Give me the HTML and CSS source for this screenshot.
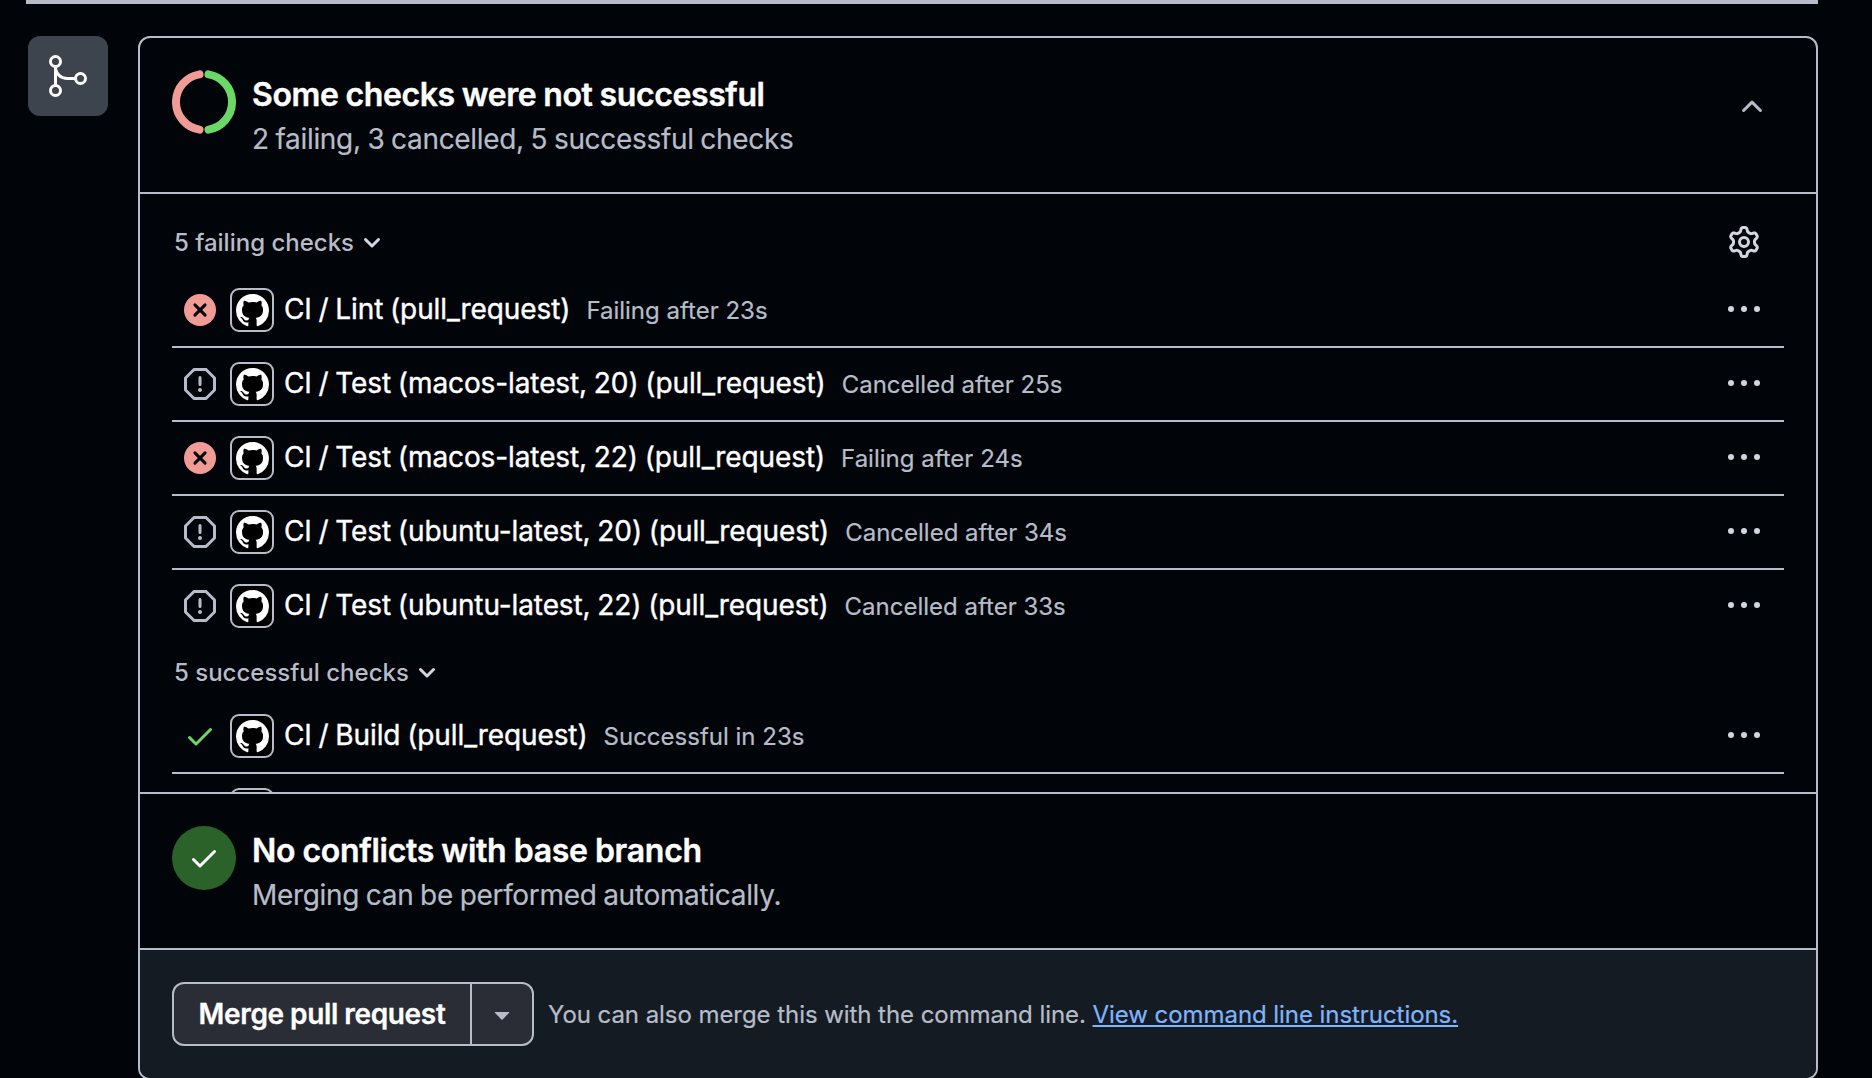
FILE: index.html
```html
<!DOCTYPE html>
<html lang="en">
<head>
<meta charset="utf-8">
<title>Merge status</title>
<link rel="stylesheet" href="styles.css">
</head>
<body>
<svg class="sprite" aria-hidden="true">
  <symbol id="fail" viewBox="0 0 32 32"><circle cx="16" cy="16" r="16" fill="#f19b96"/><path d="M10.9 10.9 21.1 21.1M21.1 10.9 10.9 21.1" stroke="#010409" stroke-width="3" stroke-linecap="round"/></symbol>
  <symbol id="stop" viewBox="0 0 16 16"><path fill="#b7bdc8" d="M4.47.22A.749.749 0 0 1 5 0h6c.199 0 .389.079.53.22l4.25 4.25c.141.14.22.331.22.53v6a.749.749 0 0 1-.22.53l-4.25 4.25A.749.749 0 0 1 11 16H5a.749.749 0 0 1-.53-.22L.22 11.53A.749.749 0 0 1 0 11V5c0-.199.079-.389.22-.53Zm.84 1.28L1.5 5.31v5.38l3.81 3.81h5.38l3.81-3.81V5.31L10.69 1.5ZM8 4a.75.75 0 0 1 .75.75v3.5a.75.75 0 0 1-1.5 0v-3.5A.75.75 0 0 1 8 4Zm0 8a1 1 0 1 1 0-2 1 1 0 0 1 0 2Z"/></symbol>
  <symbol id="check" viewBox="0 0 16 16"><path d="M13.78 4.22a.75.75 0 0 1 0 1.06l-7.25 7.25a.75.75 0 0 1-1.06 0L2.22 9.28a.751.751 0 0 1 .018-1.042.751.751 0 0 1 1.042-.018L6 10.94l6.72-6.72a.75.75 0 0 1 1.06 0Z"/></symbol>
  <symbol id="mark" viewBox="0 0 16 16"><path fill="#fff" d="M8 0c4.42 0 8 3.58 8 8a8.013 8.013 0 0 1-5.45 7.59c-.4.08-.55-.17-.55-.38 0-.27.01-1.13.01-2.2 0-.75-.25-1.23-.54-1.48 1.78-.2 3.65-.88 3.65-3.95 0-.88-.31-1.59-.82-2.15.08-.2.36-1.02-.08-2.12 0 0-.67-.22-2.2.82-.64-.18-1.32-.27-2-.27-.68 0-1.36.09-2 .27-1.53-1.03-2.2-.82-2.2-.82-.44 1.1-.16 1.92-.08 2.12-.51.56-.82 1.28-.82 2.15 0 3.06 1.86 3.75 3.64 3.95-.23.2-.44.55-.51 1.07-.46.21-1.61.55-2.33-.66-.15-.24-.6-.83-1.23-.82-.67.01-.27.38.01.53.34.19.73.9.82 1.13.16.45.68 1.31 2.69.94 0 .67.01 1.3.01 1.49 0 .21-.15.45-.55.38A7.995 7.995 0 0 1 0 8c0-4.42 3.58-8 8-8Z"/></symbol>
  <symbol id="dots" viewBox="0 0 32 32"><g fill="#d1d7e0"><circle cx="3" cy="16" r="3"/><circle cx="16" cy="16" r="3"/><circle cx="29" cy="16" r="3"/></g></symbol>
  <symbol id="down" viewBox="0 0 24 24"><path d="M5.5 8.5 12 15l6.500-6.500" fill="none" stroke="#d1d7e0" stroke-width="3" stroke-linecap="round" stroke-linejoin="round"/></symbol>
</svg>

<div class="topbar"></div>
<div class="timeline">
  <div class="badge">
    <svg width="80" height="80" viewBox="28 36 80 80" fill="none" stroke="#fff" stroke-width="3"><circle cx="55.500" cy="61.500" r="5"/><circle cx="55.500" cy="90.500" r="5"/><circle cx="80.500" cy="78.500" r="5"/><path d="M55.500 66.500v19M55.500 66.500c0 7 5 12 12 12h8"/></svg>
  </div>
  <section class="box">
    <header class="summary">
      <svg width="64" height="64" viewBox="0 0 64 64" fill="none" stroke-width="8" stroke-linecap="round"><path d="M27.500 4.360A28 28 0 0 0 27.500 59.640" stroke="#f19b96"/><path d="M36.500 4.360A28 28 0 0 1 36.500 59.640" stroke="#6ad766"/></svg>
      <div class="summary-text">
        <h2 class="title">Some checks were not successful</h2>
        <p class="subtitle">2 failing, 3 cancelled, 5 successful checks</p>
      </div>
      <svg class="collapse" width="32" height="32" viewBox="0 0 32 32"><path d="M7.600 20.500 16 12.100l8.400 8.400" fill="none" stroke="#b7bdc8" stroke-width="3" stroke-linecap="round" stroke-linejoin="round"/></svg>
    </header>

    <div class="checks">
      <div class="group-head first">
        <span class="group-name">5 failing checks</span><svg width="24" height="24"><use href="#down"/></svg>
        <svg class="gear" width="32" height="32" viewBox="0 0 16 16"><path fill="#d1d7e0" d="M8 0a8.200 8.200 0 0 1 .701.031C9.444.095 9.990.645 10.160 1.290l.288 1.107c.018.066.079.158.212.224.231.114.454.243.668.386.123.082.233.090.299.071l1.103-.303c.644-.176 1.392.021 1.820.630.270.385.506.792.704 1.218.315.675.111 1.422-.364 1.891l-.814.806c-.049.048-.098.147-.088.294.016.257.016.515 0 .772-.010.147.038.246.088.294l.814.806c.475.469.679 1.216.364 1.891a7.977 7.977 0 0 1-.704 1.217c-.428.610-1.176.807-1.820.630l-1.102-.302c-.067-.019-.177-.011-.300.071a5.909 5.909 0 0 1-.668.386c-.133.066-.194.158-.211.224l-.290 1.106c-.168.646-.715 1.196-1.458 1.260a8.006 8.006 0 0 1-1.402 0c-.743-.064-1.289-.614-1.458-1.260l-.289-1.106c-.018-.066-.079-.158-.212-.224a5.738 5.738 0 0 1-.668-.386c-.123-.082-.233-.090-.299-.071l-1.103.303c-.644.176-1.392-.021-1.820-.630a8.120 8.120 0 0 1-.704-1.218c-.315-.675-.111-1.422.363-1.891l.815-.806c.050-.048.098-.147.088-.294a6.214 6.214 0 0 1 0-.772c.010-.147-.038-.246-.088-.294l-.815-.806C.635 6.045.431 5.298.746 4.623a7.920 7.920 0 0 1 .704-1.217c.428-.610 1.176-.807 1.820-.630l1.102.302c.067.019.177.011.300-.071.214-.143.437-.272.668-.386.133-.066.194-.158.211-.224l.290-1.106C6.009.645 6.556.095 7.299.030 7.530.010 7.764 0 8 0Zm-.571 1.525c-.036.003-.108.036-.137.146l-.289 1.105c-.147.561-.549.967-.998 1.189-.173.086-.340.183-.500.290-.417.278-.970.423-1.529.270l-1.103-.303c-.109-.030-.175.016-.195.045-.220.312-.412.644-.573.990-.014.031-.021.110.059.190l.815.806c.411.406.562.957.530 1.456a4.709 4.709 0 0 0 0 .582c.032.499-.119 1.050-.530 1.456l-.815.806c-.081.080-.073.159-.059.190.162.346.353.677.573.989.020.030.085.076.195.046l1.102-.303c.560-.153 1.113-.008 1.530.270.161.107.328.204.501.290.447.222.850.629.997 1.189l.289 1.105c.029.109.101.143.137.146a6.600 6.600 0 0 0 1.142 0c.036-.003.108-.036.137-.146l.289-1.105c.147-.561.549-.967.998-1.189.173-.086.340-.183.500-.290.417-.278.970-.423 1.529-.270l1.103.303c.109.029.175-.016.195-.045.220-.313.411-.644.573-.990.014-.031.021-.110-.059-.190l-.815-.806c-.411-.406-.562-.957-.530-1.456a4.709 4.709 0 0 0 0-.582c-.032-.499.119-1.050.530-1.456l.815-.806c.081-.080.073-.159.059-.190a6.464 6.464 0 0 0-.573-.989c-.020-.030-.085-.076-.195-.046l-1.102.303c-.560.153-1.113.008-1.530-.270a4.440 4.440 0 0 0-.501-.290c-.447-.222-.850-.629-.997-1.189l-.289-1.105c-.029-.110-.101-.143-.137-.146a6.600 6.600 0 0 0-1.142 0ZM11 8a3 3 0 1 1-6 0 3 3 0 0 1 6 0ZM9.500 8a1.500 1.500 0 1 0-3.001.001A1.500 1.500 0 0 0 9.500 8Z"/></svg>
      </div>
      <ul class="rows">
        <li class="row"><svg class="status"><use href="#fail"/></svg><span class="avatar"><svg><use href="#mark"/></svg></span><span class="name">CI / Lint (pull_request)</span><span class="time">Failing after 23s</span><svg class="menu"><use href="#dots"/></svg></li>
        <li class="row"><svg class="status"><use href="#stop"/></svg><span class="avatar"><svg><use href="#mark"/></svg></span><span class="name">CI / Test (macos-latest, 20) (pull_request)</span><span class="time">Cancelled after 25s</span><svg class="menu"><use href="#dots"/></svg></li>
        <li class="row"><svg class="status"><use href="#fail"/></svg><span class="avatar"><svg><use href="#mark"/></svg></span><span class="name">CI / Test (macos-latest, 22) (pull_request)</span><span class="time">Failing after 24s</span><svg class="menu"><use href="#dots"/></svg></li>
        <li class="row"><svg class="status"><use href="#stop"/></svg><span class="avatar"><svg><use href="#mark"/></svg></span><span class="name">CI / Test (ubuntu-latest, 20) (pull_request)</span><span class="time">Cancelled after 34s</span><svg class="menu"><use href="#dots"/></svg></li>
        <li class="row last"><svg class="status"><use href="#stop"/></svg><span class="avatar"><svg><use href="#mark"/></svg></span><span class="name">CI / Test (ubuntu-latest, 22) (pull_request)</span><span class="time">Cancelled after 33s</span><svg class="menu"><use href="#dots"/></svg></li>
      </ul>
      <div class="group-head">
        <span class="group-name">5 successful checks</span><svg width="24" height="24"><use href="#down"/></svg>
      </div>
      <ul class="rows">
        <li class="row"><svg class="status ok"><use href="#check"/></svg><span class="avatar"><svg><use href="#mark"/></svg></span><span class="name">CI / Build (pull_request)</span><span class="time">Successful in 23s</span><svg class="menu"><use href="#dots"/></svg></li>
        <li class="row"><svg class="status ok"><use href="#check"/></svg><span class="avatar"><svg><use href="#mark"/></svg></span></li>
      </ul>
    </div>

    <div class="summary">
      <span class="ok-disc"><svg width="32" height="32" fill="#fff"><use href="#check"/></svg></span>
      <div class="summary-text">
        <h2 class="title loose">No conflicts with base branch</h2>
        <p class="subtitle">Merging can be performed automatically.</p>
      </div>
    </div>

    <footer class="merge">
      <div class="split">
        <button class="merge-btn">Merge pull request</button>
        <button class="caret" aria-label="Select merge method"><svg width="32" height="32" viewBox="0 0 16 16"><path fill="#b7bdc8" d="m4.427 7.427 3.396 3.396a.25.25 0 0 0 .354 0l3.396-3.396A.25.25 0 0 0 11.396 7H4.604a.25.25 0 0 0-.177.427Z"/></svg></button>
      </div>
      <p class="hint">You can also merge this with the command line. <a class="link" href="#">View command line instructions.</a></p>
    </footer>
  </section>
</div>
</body>
</html>
```
FILE: styles.css
```css
* { box-sizing: border-box; }
html, body { height: 100%; overflow: hidden; }
body {
  margin: 0;
  background: #010409;
  color: #fff;
  font-family: Inter, "Liberation Sans", sans-serif;
}
h2, p, ul { margin: 0; padding: 0; font-weight: 400; }
svg { display: block; flex: none; }
.sprite { width: 0; height: 0; position: absolute; }

.topbar { height: 4px; margin: 0 54px 32px 26px; background: #b7bdc8; }
.timeline { display: flex; align-items: flex-start; gap: 30px; padding: 0 54px 0 28px; }
.badge { width: 80px; height: 80px; border-radius: 12px; background: #3d444d; flex: none; }
.box {
  flex: 1;
  height: 1044px;
  border: 2px solid #b7bdc8;
  border-radius: 12px;
  overflow: hidden;
}

.summary { display: flex; gap: 16px; height: 154px; padding: 32px; }
.summary-text { flex: 1; }
.title {
  margin-bottom: -2px;
  font-size: 32px;
  line-height: 50px;
  font-weight: 600;
  letter-spacing: -0.38px;
  word-spacing: -0.75px;
  white-space: nowrap;
  -webkit-text-stroke: 0.4px;
}
.title.loose { letter-spacing: -0.27px; word-spacing: -0.6px; }
.subtitle {
  font-size: 28px;
  line-height: 42px;
  letter-spacing: -0.32px;
  word-spacing: -0.85px;
  color: #b7bdc8;
  white-space: nowrap;
  -webkit-text-stroke: 0.2px;
}
.collapse { margin: 20px 16px 0 0; }

.checks {
  height: 602px;
  padding: 0 32px;
  border: solid #b7bdc8;
  border-width: 2px 0;
  overflow: hidden;
}
.group-head { display: flex; align-items: center; gap: 6px; height: 56px; padding: 2px 0 0 2px; }
.group-head.first { height: 80px; padding-top: 18px; }
.group-name { font-size: 24px; line-height: 36px; font-weight: 500; color: #b7bdc8; white-space: nowrap; }
.gear { margin: -2px 24px 0 auto; }

.rows { list-style: none; }
.row {
  display: flex;
  align-items: center;
  height: 74px;
  padding: 0 24px 0 12px;
  border-bottom: 2px solid #b7bdc8;
  white-space: nowrap;
}
.row.last { border-color: transparent; }
.status { width: 32px; height: 32px; margin-right: 14px; }
.ok { fill: #6ad766; }
.avatar {
  display: grid;
  place-items: center;
  flex: none;
  width: 44px;
  height: 44px;
  margin-right: 10px;
  border: 2px solid #b7bdc8;
  border-radius: 9px;
  background: #000;
}
.avatar svg { width: 33px; height: 33px; }
.name {
  padding-bottom: 2px;
  font-size: 28px;
  line-height: 42px;
  letter-spacing: -0.1px;
  word-spacing: -1px;
  -webkit-text-stroke: 0.4px;
}
.time {
  margin-left: 16px;
  padding-top: 2px;
  font-size: 24px;
  line-height: 36px;
  color: #b7bdc8;
  -webkit-text-stroke: 0.2px;
}
.menu { width: 32px; height: 32px; margin: -2px 0 0 auto; }

.ok-disc {
  display: grid;
  place-items: center;
  flex: none;
  width: 64px;
  height: 64px;
  border-radius: 50%;
  background: #2a6229;
}

.merge {
  display: flex;
  align-items: center;
  gap: 14px;
  height: 130px;
  padding: 0 32px;
  border-top: 2px solid #b7bdc8;
  background: #151b23;
}
.split {
  display: flex;
  width: 362px;
  height: 64px;
  border: 2px solid #b7bdc8;
  border-radius: 12px;
  background: #2a2d36;
  overflow: hidden;
}
.split button { border: 0; padding: 0; background: none; color: #fff; font-family: inherit; }
.split .merge-btn {
  width: 296px;
  font-size: 28px;
  font-weight: 600;
  line-height: 42px;
  letter-spacing: -0.33px;
  word-spacing: -0.5px;
  white-space: nowrap;
  -webkit-text-stroke: 0.3px;
}
.split .caret { display: grid; place-items: center; flex: 1; border-left: 2px solid #b7bdc8; }
.hint {
  padding-top: 2px;
  font-size: 24px;
  line-height: 36px;
  letter-spacing: -0.06px;
  color: #b7bdc8;
  white-space: nowrap;
  -webkit-text-stroke: 0.2px;
}
.link { color: #80b4fb; text-decoration: underline; text-decoration-thickness: 2px; text-underline-offset: 2px; }
```
